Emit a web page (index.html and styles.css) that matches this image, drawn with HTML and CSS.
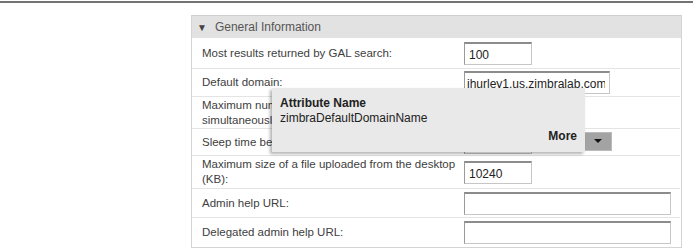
FILE: index.html
```html
<!DOCTYPE html>
<html lang="en">
<head>
  <meta charset="UTF-8" />
  <title>General Information</title>
  <link rel="stylesheet" href="styles.css">
</head>
<body>

<div class="top-rule"></div>

<div class="panel">
  <div class="panel-header">
    <span class="arrow">&#9660;</span>
    <span>General Information</span>
  </div>

  <div class="row r1">
    <div class="label">Most results returned by GAL search:</div>
    <div class="field"><input class="txt short" type="text" value="100"></div>
  </div>

  <div class="row r2">
    <div class="label">Default domain:</div>
    <div class="field"><input class="txt mid" type="text" value="jhurley1.us.zimbralab.com"></div>
  </div>

  <div class="row r3">
    <div class="label">Maximum number of scheduled tasks that can run simultaneously:</div>
    <div class="field"></div>
  </div>

  <div class="row r4">
    <div class="label">Sleep time between subsequent mailbox purges:</div>
    <div class="field">
      <input class="txt short" type="text" value="">
      <div class="select"><span class="select-btn"><span class="caret"></span></span></div>
    </div>
  </div>

  <div class="row r5">
    <div class="label">Maximum size of a file uploaded from the desktop (KB):</div>
    <div class="field"><input class="txt short" type="text" value="10240"></div>
  </div>

  <div class="row r6">
    <div class="label">Admin help URL:</div>
    <div class="field"><input class="txt long" type="text" value=""></div>
  </div>

  <div class="row r7">
    <div class="label">Delegated admin help URL:</div>
    <div class="field"><input class="txt long" type="text" value=""></div>
  </div>

  <div class="tooltip">
    <div class="tip-title">Attribute Name</div>
    <div class="tip-value">zimbraDefaultDomainName</div>
    <div class="tip-more">More</div>
  </div>
</div>

</body>
</html>
```

FILE: styles.css
```css
* { box-sizing: border-box; }
body, html {
  margin: 0;
  padding: 0;
  background: #fff;
  font-family: "Liberation Sans", Arial, sans-serif;
  font-size: 11.5px;
  color: #404040;
  overflow: hidden;
}
.top-rule {
  height: 2px;
  width: 693px;
  margin-top: 1px;
  background: #737373;
}
.panel {
  position: relative;
  margin: 12px 0 0 191px;
  width: 491px;
  border: 1px solid #d4d4d4;
  border-top: none;
}
.panel-header {
  height: 23px;
  background: #e2e2e2;
  border-top: 1px solid #cfcfcf;
  display: flex;
  align-items: center;
  gap: 8px;
  padding-left: 5px;
  color: #555;
  font-size: 12px;
}
.arrow { font-size: 10px; color: #444; }
.row {
  display: flex;
  align-items: center;
  border-bottom: 1px solid #e4e4e4;
  margin-right: 1px;
}
.row.r7 { border-bottom: none; }
.r1 { height: 31px; }
.r2 { height: 28px; }
.r3 { height: 32px; }
.r4 { height: 27px; }
.r5 { height: 33px; }
.r6 { height: 29px; }
.r7 { height: 29px; }
.label {
  width: 272px;
  padding-left: 10px;
  padding-right: 2px;
  line-height: 15px;
}
.r4 .label { white-space: nowrap; overflow: hidden; }
.field { flex: 1; display: flex; align-items: center; gap: 8px; }
.txt {
  height: 23px;
  font-family: "Liberation Sans", Arial, sans-serif;
  font-size: 12px;
  color: #222;
  padding: 2px 4px 0;
  background: #fff;
  border: 1px solid #c6c6c6;
  border-top: 2px solid #8c8c8c;
  border-left-color: #9a9a9a;
  outline: none;
}
.txt.short { width: 68px; }
.txt.mid { width: 146px; padding-left: 2px; }
.txt.long { width: 207px; }
.select {
  width: 72px;
  height: 19px;
  margin-top: -2px;
  border: 1px solid #bbb;
  display: flex;
  justify-content: flex-end;
}
.select-btn {
  width: 27px;
  background: #a3a3a3;
  border-left: 1px solid #888;
  display: flex;
  align-items: center;
  justify-content: center;
}
.caret {
  width: 0;
  height: 0;
  border-left: 4px solid transparent;
  border-right: 4px solid transparent;
  border-top: 4px solid #111;
}
.tooltip {
  position: absolute;
  left: 80px;
  top: 73px;
  width: 313px;
  height: 64px;
  background: #e9e9e9;
  box-shadow: -2px 2px 3px rgba(0, 0, 0, 0.3);
  padding: 8px 8px 0 8px;
  color: #222;
  font-size: 12px;
  line-height: 15px;
}
.tip-title { font-weight: bold; }
.tip-more {
  font-weight: bold;
  text-align: right;
  margin-top: 3px;
}
```
